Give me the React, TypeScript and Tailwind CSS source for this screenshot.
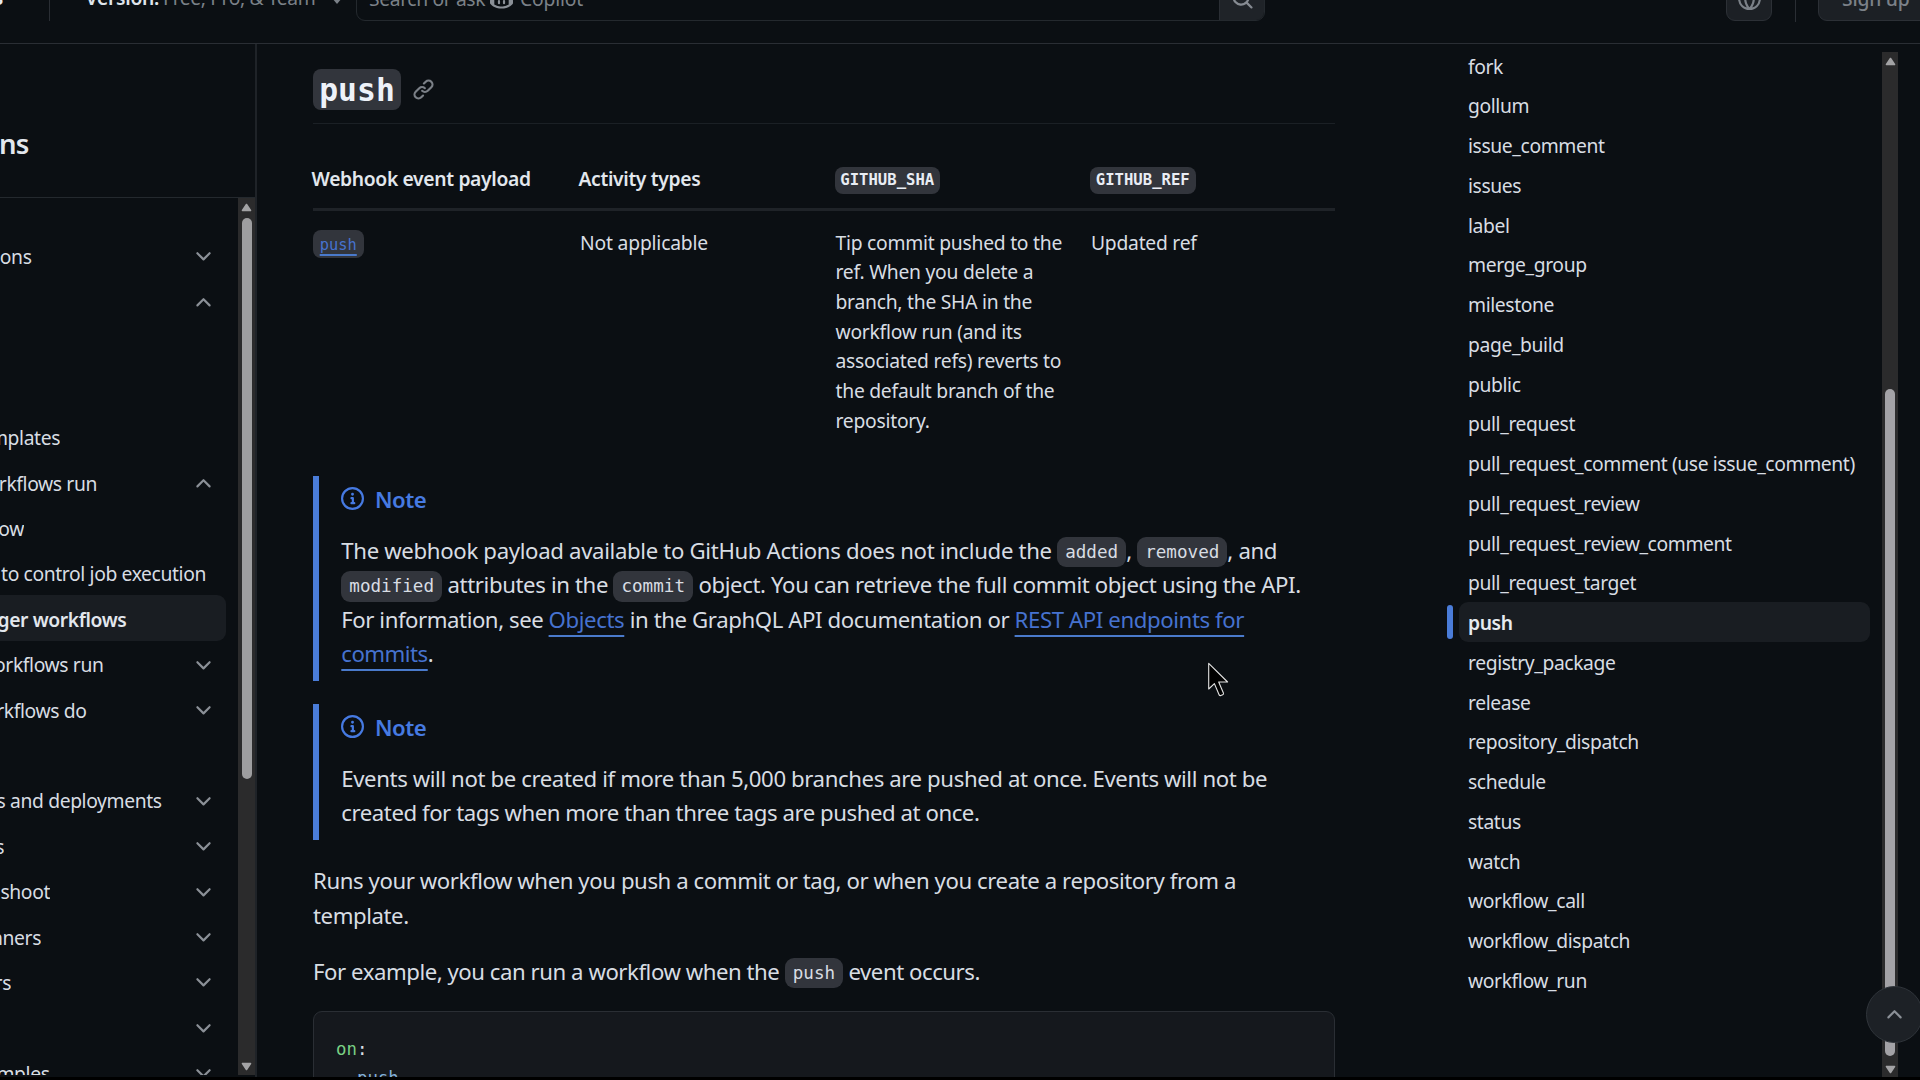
import type { ReactNode } from "react";

const ICONS = {
  chevronDown:
    "M12.78 5.22a.749.749 0 0 1 0 1.06l-4.25 4.25a.749.749 0 0 1-1.06 0L3.22 6.28a.749.749 0 1 1 1.06-1.06L8 8.939l3.72-3.719a.749.749 0 0 1 1.06 0Z",
  chevronUp:
    "M3.22 10.53a.749.749 0 0 1 0-1.06l4.25-4.25a.749.749 0 0 1 1.06 0l4.25 4.25a.749.749 0 1 1-1.06 1.06L8 6.811 4.28 10.53a.749.749 0 0 1-1.06 0Z",
  link: "m7.775 3.275 1.25-1.25a3.5 3.5 0 1 1 4.95 4.95l-2.5 2.5a3.5 3.5 0 0 1-4.95 0 .751.751 0 0 1 .018-1.042.751.751 0 0 1 1.042-.018 1.998 1.998 0 0 0 2.83 0l2.5-2.5a2.002 2.002 0 0 0-2.83-2.83l-1.25 1.25a.751.751 0 0 1-1.042-.018.751.751 0 0 1-.018-1.042Zm-4.69 9.64a1.998 1.998 0 0 0 2.83 0l1.25-1.25a.751.751 0 0 1 1.042.018.751.751 0 0 1 .018 1.042l-1.25 1.25a3.5 3.5 0 1 1-4.95-4.95l2.5-2.5a3.5 3.5 0 0 1 4.95 0 .751.751 0 0 1-.018 1.042.751.751 0 0 1-1.042.018 1.998 1.998 0 0 0-2.83 0l-2.5 2.5a1.998 1.998 0 0 0 0 2.83Z",
  info: "M0 8a8 8 0 1 1 16 0A8 8 0 0 1 0 8Zm8-6.5a6.5 6.5 0 1 0 0 13 6.5 6.5 0 0 0 0-13ZM6.5 7.75A.75.75 0 0 1 7.25 7h1a.75.75 0 0 1 .75.75v2.75h.25a.75.75 0 0 1 0 1.5h-2a.75.75 0 0 1 0-1.5h.25v-2h-.25a.75.75 0 0 1-.75-.75ZM8 6a1 1 0 1 1 0-2 1 1 0 0 1 0 2Z",
  globe:
    "M8 0a8 8 0 1 1 0 16A8 8 0 0 1 8 0ZM5.78 8.75a9.64 9.64 0 0 0 1.363 4.177c.255.426.542.832.857 1.215.245-.296.551-.705.857-1.215A9.64 9.64 0 0 0 10.22 8.75Zm4.44-1.5a9.64 9.64 0 0 0-1.363-4.177c-.307-.51-.612-.919-.857-1.215a9.927 9.927 0 0 0-.857 1.215A9.64 9.64 0 0 0 5.78 7.25Zm-5.944 1.5H1.543a6.507 6.507 0 0 0 4.666 5.5c-.123-.181-.24-.365-.352-.552-.715-1.192-1.437-2.874-1.581-4.948Zm-2.733-1.5h2.733c.144-2.074.866-3.756 1.58-4.948.12-.197.237-.381.353-.552a6.507 6.507 0 0 0-4.666 5.5Zm10.181 1.5c-.144 2.074-.866 3.756-1.58 4.948-.12.197-.237.381-.353.552a6.507 6.507 0 0 0 4.666-5.5Zm2.733-1.5a6.507 6.507 0 0 0-4.666-5.5c.123.181.24.365.353.552.714 1.192 1.436 2.874 1.58 4.948Z",
  search:
    "M10.68 11.74a6 6 0 0 1-7.922-8.982 6 6 0 0 1 8.982 7.922l3.04 3.04a.749.749 0 0 1-.326 1.275.749.749 0 0 1-.734-.215ZM11.5 7a4.499 4.499 0 1 0-8.997 0A4.499 4.499 0 0 0 11.5 7Z",
  copilot:
    "M7.998 15.035c-4.562 0-7.873-2.914-7.998-3.749V9.338c.085-.628.677-1.686 1.588-2.065.013-.07.024-.143.036-.218.029-.183.06-.384.126-.612-.201-.508-.254-1.084-.254-1.656 0-.87.128-1.769.693-2.484.579-.733 1.494-1.124 2.724-1.261 1.206-.134 2.262.034 2.944.765.05.053.096.108.139.165.044-.057.094-.112.143-.165.682-.731 1.738-.899 2.944-.765 1.23.137 2.145.528 2.724 1.261.566.715.693 1.614.693 2.484 0 .572-.053 1.148-.254 1.656.066.228.098.429.126.612.012.076.024.148.037.218.924.385 1.522 1.471 1.591 2.095v1.872c0 .766-3.351 3.795-8.002 3.795Zm0-1.485c2.28 0 4.584-1.11 5.002-1.433V7.862l-.023-.116c-.49.21-1.075.291-1.727.291-1.146 0-2.059-.327-2.71-.991A3.222 3.222 0 0 1 8 6.303a3.24 3.24 0 0 1-.544.743c-.65.664-1.563.991-2.71.991-.652 0-1.236-.081-1.727-.291l-.023.116v4.255c.419.323 2.722 1.433 5.002 1.433ZM6.25 9.037a.75.75 0 0 1 .75.75v1.501a.75.75 0 0 1-1.5 0V9.787a.75.75 0 0 1 .75-.75Zm4.25.75v1.501a.75.75 0 0 1-1.5 0V9.787a.75.75 0 0 1 1.5 0Z",
};

function Icon({ name, className }: { name: keyof typeof ICONS; className?: string }) {
  return (
    <svg viewBox="0 0 16 16" fill="currentColor" className={`size-[23px] shrink-0 ${className ?? ""}`}>
      <path d={ICONS[name]} />
    </svg>
  );
}

function Triangle({ down }: { down?: boolean }) {
  return (
    <svg viewBox="0 0 11 9" className={`h-[9px] w-[11px] shrink-0 ${down ? "rotate-180" : ""}`}>
      <path d="M5.5 1.5 9.5 7.5H1.5Z" fill="#a3a3a5" stroke="#a3a3a5" strokeWidth="1.6" strokeLinejoin="round" />
    </svg>
  );
}

// `end` is the x coordinate where the label stops; its beginning runs off the window's left edge.
type NavItem = { label: string; end: number; chevron?: "up" | "down"; active?: boolean };

const NAV: NavItem[] = [
  { label: "ons", end: 31.5, chevron: "down" },
  { label: "", end: 0, chevron: "up" },
  { label: "", end: 0 },
  { label: "", end: 0 },
  { label: "mplates", end: 60 },
  { label: "rkflows run", end: 97, chevron: "up" },
  { label: "ow", end: 24 },
  { label: "to control job execution", end: 206 },
  { label: "ger workflows", end: 126.5, active: true },
  { label: "orkflows run", end: 103.5, chevron: "down" },
  { label: "rkflows do", end: 86.5, chevron: "down" },
  { label: "", end: 0 },
  { label: "s and deployments", end: 161.7, chevron: "down" },
  { label: "s", end: 4, chevron: "down" },
  { label: "shoot", end: 50, chevron: "down" },
  { label: "nners", end: 41, chevron: "down" },
  { label: "rs", end: 11, chevron: "down" },
  { label: "", end: 0, chevron: "down" },
  { label: "mples", end: 49.5, chevron: "down" },
];

const TOC = [
  "fork",
  "gollum",
  "issue_comment",
  "issues",
  "label",
  "merge_group",
  "milestone",
  "page_build",
  "public",
  "pull_request",
  "pull_request_comment (use issue_comment)",
  "pull_request_review",
  "pull_request_review_comment",
  "pull_request_target",
  "push",
  "registry_package",
  "release",
  "repository_dispatch",
  "schedule",
  "status",
  "watch",
  "workflow_call",
  "workflow_dispatch",
  "workflow_run",
];

function Code({ children }: { children: ReactNode }) {
  return (
    <code className="rounded-[9px] bg-[#32353c] px-[8px] py-[5.2px] align-[1px] font-['DejaVu_Sans_Mono',monospace] text-[17.6px] leading-none tracking-normal">
      {children}
    </code>
  );
}

function HeadCode({ children }: { children: ReactNode }) {
  return (
    <code className="-ml-px mt-[2px] flex h-[27px] w-[105.5px] items-center justify-center rounded-[8px] bg-[#32353c] pt-[2px] font-['DejaVu_Sans_Mono',monospace] text-[15.6px] font-bold leading-none tracking-normal text-[#e9edf4]">
      {children}
    </code>
  );
}

function Link({ children }: { children: ReactNode }) {
  return (
    <a className="text-[#4672cf] underline decoration-[#4a7acb] decoration-2 underline-offset-[7px] [text-decoration-skip-ink:none]">
      {children}
    </a>
  );
}

function Note({ children }: { children: ReactNode }) {
  return (
    <div className="border-l-[6px] border-[#4a7cd8] pb-[9.3px] pl-[22.3px] pt-[5.5px]">
      <div className="flex h-[34.4px] items-center gap-[10.7px] font-semibold tracking-[-0.5px] text-[#467ae2]">
        <Icon name="info" />
        <span className="mt-[3px]">Note</span>
      </div>
      <p className="mt-[18.2px]">{children}</p>
    </div>
  );
}

function Header() {
  return (
    <header className="h-[44px] shrink-0 overflow-hidden border-b border-[#2a2e34]">
      <div className="-mt-[25px] flex h-[46px] items-center">
        <div className="flex w-[49px] shrink-0 items-center overflow-hidden">
          <span className="-ml-[7px] text-[21px] font-semibold text-[#e6ebf2]">s</span>
        </div>
        <div className="h-[46px] w-px shrink-0 bg-[#2a2e34]" />
        <div className="flex w-[306px] shrink-0 items-center pl-[35.5px] pt-[1px]">
          <span className="font-semibold tracking-[-0.3px] text-[#dfe4ea]">Version:</span>
          <span className="ml-[4px] text-[#7b8188]">Free, Pro, &amp; Team</span>
          <svg viewBox="0 0 12 7" className="ml-[17px] mt-1 h-[6px] w-[10px]">
            <path d="M0 0h12L6 7Z" fill="#7b8188" />
          </svg>
        </div>
        <div className="flex h-[46px] w-[909px] shrink-0 overflow-hidden rounded-[9px] border border-[#24292e]">
          <div className="flex flex-1 items-center pl-[12px] text-[#7b8188]">
            <span className="pt-[2px]">Search or ask</span>
            <Icon name="copilot" className="ml-[5px] text-[#8b9097]" />
            <span className="ml-[7px] pt-[2px] tracking-[-0.2px]">Copilot</span>
          </div>
          <div className="flex w-[45px] items-center justify-center border-l border-[#2a2e34] bg-[#1f2328] text-[#868b92]">
            <Icon name="search" />
          </div>
        </div>
        <div className="ml-[461px] flex h-[46px] w-[46px] shrink-0 items-center justify-center rounded-[9px] border border-[#2c3036] bg-[#1c2025] text-[#7b8188]">
          <Icon name="globe" />
        </div>
        <div className="ml-[23px] h-[48px] w-px shrink-0 bg-[#2a2e34]" />
        <div className="ml-[22px] flex h-[46px] w-[120px] shrink-0 items-center rounded-[9px] border border-[#2c3036] bg-[#1c2025] pl-[23px] pt-[3px] font-medium tracking-[-0.2px] text-[#7b8188]">
          Sign up
        </div>
      </div>
    </header>
  );
}

function Sidebar() {
  return (
    <aside className="flex w-[257px] shrink-0 flex-col border-r-2 border-[#1f2328]">
      <div className="h-[154px] shrink-0 overflow-hidden border-b border-[#24292e] pt-[83.5px]">
        <div className="flex w-[28.5px] justify-end text-[27.5px] font-semibold leading-[32px] tracking-[-0.8px] text-[#e2e7ed]">
          ns
        </div>
      </div>
      <div className="flex h-[877px] overflow-hidden">
        <nav className="flex-1 overflow-hidden pt-[34px]">
          {NAV.map((item, i) => (
            <div
              key={i}
              className={`mr-[12px] flex h-[45.4px] items-center justify-between pt-[2px] ${
                item.active ? "rounded-r-[9px] bg-[#191d22] font-semibold text-[#e2e7ed]" : ""
              }`}
            >
              <div
                className="flex shrink-0 justify-end overflow-hidden whitespace-nowrap pt-[3px]"
                style={{ width: item.end }}
              >
                <span>{item.label}</span>
              </div>
              {item.chevron && (
                <Icon
                  name={item.chevron === "up" ? "chevronUp" : "chevronDown"}
                  className="mr-[11.5px] mt-[2px] text-[#8b9097]"
                />
              )}
            </div>
          ))}
        </nav>
        <div className="flex w-[17px] shrink-0 flex-col items-center bg-[#2b2b2c] pb-1 pt-[5px]">
          <Triangle />
          <div className="mt-[6px] h-[561px] w-[10px] rounded-full bg-[#9e9ea0]" />
          <div className="flex-1" />
          <Triangle down />
        </div>
      </div>
    </aside>
  );
}

function Article() {
  return (
    <main className="w-[1078px] shrink-0 overflow-hidden whitespace-nowrap pl-[56px] pt-[25px] text-[22.2px] leading-[34.4px] tracking-[-0.4px]">
      <div className="w-[1022px]">
        <h2 className="flex h-[55px] gap-[11px] border-b border-[#1b2025]">
          <code className="flex h-[41px] w-[88px] items-center justify-center rounded-[8px] bg-[#32353c] pt-[3px] font-['DejaVu_Sans_Mono',monospace] text-[31.4px] font-bold leading-none tracking-normal text-[#eef2f9]">
            push
          </code>
          <Icon name="link" className="mt-[9px] text-[#7b8087]" />
        </h2>

        <div className="mt-[27px] text-[19.3px] leading-[29.7px] tracking-[-0.25px]">
          <div className="grid h-[59.5px] grid-cols-[267px_255.5px_255.5px_1fr] items-center border-b-[3px] border-[#1f2328] font-semibold tracking-[-0.34px] text-[#e2e7ed]">
            <span className="-ml-[1.5px]">Webhook event payload</span>
            <span className="-ml-[1.5px]">Activity types</span>
            <HeadCode>GITHUB_SHA</HeadCode>
            <HeadCode>GITHUB_REF</HeadCode>
          </div>
          <div className="mt-[17px] grid grid-cols-[267px_255.5px_255.5px_1fr]">
            <div>
              <a className="mt-[2.5px] flex h-[27.5px] w-[50.5px] items-center justify-center rounded-[8px] bg-[#32353c] pt-[4px] font-['DejaVu_Sans_Mono',monospace] text-[15.4px] leading-none tracking-normal text-[#4672cf] underline decoration-[#4a7acb] decoration-2 underline-offset-[4px] [text-decoration-skip-ink:none]">
                push
              </a>
            </div>
            <p className="tracking-[-0.18px]">Not applicable</p>
            <p>
              Tip commit pushed to the
              <br />
              ref. When you delete a
              <br />
              branch, the SHA in the
              <br />
              workflow run (and its
              <br />
              associated refs) reverts to
              <br />
              the default branch of the
              <br />
              repository.
            </p>
            <p>Updated ref</p>
          </div>
        </div>

        <div className="mt-[40.5px]">
          <Note>
            <span className="tracking-[-0.34px]">
              The webhook payload available to GitHub Actions does not include the <Code>added</Code>, <Code>removed</Code>, and
            </span>
            <br />
            <span className="tracking-[-0.38px]">
              <Code>modified</Code> attributes in the <Code>commit</Code> object. You can retrieve the full commit object using the
              API.
            </span>
            <br />
            <span className="tracking-[-0.45px]">For information, see </span>
            <span className="tracking-[-0.4px]">
              <Link>Objects</Link> in the GraphQL API documentation or <Link>REST API endpoints for</Link>
            </span>
            <br />
            <span className="tracking-[-0.5px]">
              <Link>commits</Link>.
            </span>
          </Note>
        </div>
        <div className="mt-[23px]">
          <Note>
            Events will not be created if more than 5,000 branches are pushed at once. Events will not be
            <br />
            <span className="tracking-[-0.45px]">created for tags when more than three tags are pushed at once.</span>
          </Note>
        </div>

        <p className="mt-[24.2px] tracking-[-0.425px]">
          Runs your workflow when you push a commit or tag, or when you create a repository from a
          <br />
          template.
        </p>
        <p className="mt-[21.6px] tracking-[-0.46px]">
          For example, you can run a workflow when the <Code>push</Code> event occurs.
        </p>

        <pre className="mt-[21.5px] h-[120px] rounded-[9px] border-[1.5px] border-[#2a2e34] bg-[#15181d] pl-[22px] pt-[23px] font-['DejaVu_Sans_Mono',monospace] text-[17.4px] leading-[29.3px] tracking-normal">
          <span className="text-[#79d184]">on</span>:{"\n"}
          {"  "}
          <span className="text-[#84b1da]">push</span>
        </pre>
      </div>
    </main>
  );
}

function Toc() {
  return (
    <div className="w-[424px] shrink-0 pt-[1.5px]">
      {TOC.map((t) =>
        t === "push" ? (
          <div key={t} className="flex h-[39.75px] items-center">
            <span className="h-[34.5px] w-[6px] rounded-full bg-[#4a7cd8]" />
            <span className="ml-[6px] flex h-[39.5px] w-[411px] items-center rounded-[9px] bg-[#191d22] pl-[9px] pt-[3.5px] font-semibold text-[#e6ebf0]">
              {t}
            </span>
          </div>
        ) : (
          <div key={t} className="flex h-[39.75px] items-center whitespace-nowrap pl-[21px] pt-[3.5px]">
            {t}
          </div>
        ),
      )}
    </div>
  );
}

export default function App() {
  return (
    <div className="relative h-[1080px] w-[1920px] overflow-hidden bg-black font-['Noto_Sans',sans-serif] text-[19.3px] tracking-[-0.38px] text-[#d8dde3]">
      <div className="flex h-[1077px] flex-col overflow-hidden bg-[#0b0f13]">
        <Header />
        <div className="flex min-h-0 flex-1">
          <Sidebar />
          <Article />
          <div className="flex flex-1 pl-[112px]">
            <Toc />
            <div className="ml-[11px] mt-[8px] flex w-[16px] shrink-0 flex-col items-center bg-[#2b2b2c] pb-[3px] pt-[5px]">
              <Triangle />
              <div className="mt-[323px] h-[667px] w-[10px] rounded-full bg-[#a3a2a6]" />
              <div className="flex-1" />
              <Triangle down />
            </div>
          </div>
        </div>
      </div>

      <button className="absolute left-[1866px] top-[986px] flex size-[57px] items-center justify-center rounded-full border border-[#2f343a] bg-[#1d2126] text-[#8b9097]">
        <Icon name="chevronUp" />
      </button>

      <svg viewBox="0 0 21 35" className="absolute left-[1208px] top-[662px] h-[35px] w-[21px]">
        <path
          d="M.7 1.4V27l5.7-5.4 4.7 11.2q.5 1.2 1.7.7l1.9-.8q1.2-.5.7-1.7L10.7 20H19.6Z"
          fill="#000"
          stroke="#e4e4e4"
          strokeWidth="1.1"
          strokeLinejoin="round"
        />
      </svg>
    </div>
  );
}
